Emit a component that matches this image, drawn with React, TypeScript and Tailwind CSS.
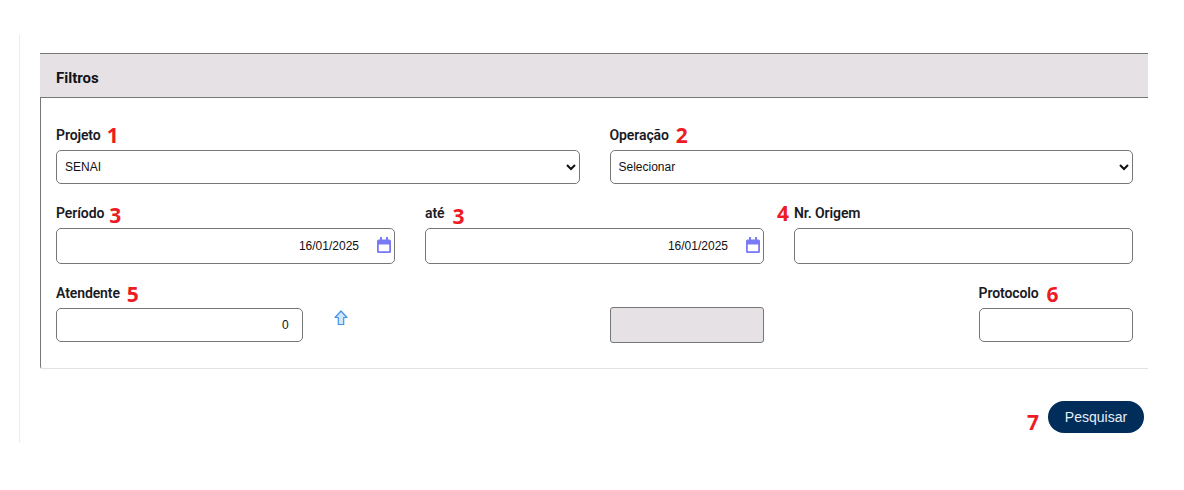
import React from "react";

const labelCls = "text-[14px] leading-[20px] font-semibold text-[#1a1a24] font-['Roboto',sans-serif] tracking-[-0.1px]";
const numCls = "text-[21px] leading-[20px] font-bold text-[#ed1c24] font-['Open_Sans',sans-serif]";
const fieldCls = "block w-full border border-[#767676] rounded-[5px] bg-white text-[12px] text-[#111] font-['Liberation_Sans',sans-serif] outline-none";

function Label({ text, n, gap = "gap-[7px]", numFirst = false, cls = "", numCls2 = "" }: { text: string; n: string; gap?: string; numFirst?: boolean; cls?: string; numCls2?: string }) {
  return (
    <div className={`flex items-center h-[20px] ${gap} ${cls}`}>
      {numFirst && <span className={`${numCls} ${numCls2}`}>{n}</span>}
      <span className={labelCls}>{text}</span>
      {!numFirst && <span className={`${numCls} ${numCls2}`}>{n}</span>}
    </div>
  );
}

function CalendarIcon() {
  return (
    <svg width="14" height="16" viewBox="0 0 14 16" className="absolute right-[4px] top-[9px]" fill="none">
      <path d="M1.5 2.5 H12.5 A1.5 1.5 0 0 1 14 4 V14.5 A1.5 1.5 0 0 1 12.5 16 H1.5 A1.5 1.5 0 0 1 0 14.5 V4 A1.5 1.5 0 0 1 1.5 2.5 Z" fill="#7a7af5" />
      <rect x="3" y="0" width="2" height="3" fill="#7a7af5" />
      <rect x="9" y="0" width="2" height="3" fill="#7a7af5" />
      <rect x="1.8" y="7.5" width="10.4" height="6.7" fill="#ffffff" />
    </svg>
  );
}

function DateField() {
  return (
    <div className="relative">
      <input readOnly value="16/01/2025" className={`${fieldCls} h-[36px] text-right pr-[35px]`} />
      <CalendarIcon />
    </div>
  );
}

export default function App() {
  return (
    <div className="w-[1184px] h-[490px] bg-white pt-[35px] pl-[19px] overflow-hidden">
      <div className="w-[1129px] h-[408px] border-l border-[#e3eef6] pl-[20px] pt-[18px]">
        <section className="w-[1108px] h-[316px] border-l border-[#767676] rounded-bl-[3px] flex flex-col">
          <div className="h-[45px] shrink-0 bg-[#e5e1e4] border-y border-[#767676] flex items-center -ml-px pl-[16px] pt-[5px]">
            <h2 className="text-[15px] font-bold text-[#111118] font-['Roboto',sans-serif]">Filtros</h2>
          </div>
          <div className="flex-1 border-b border-[#e2e2e2] pl-[15px] pr-[15px] pt-[27px]">
            <div className="grid grid-cols-12 gap-x-[30px]">
              <div className="col-span-6">
                <Label text="Projeto" n="1" gap="gap-[6px]" />
                <select defaultValue="SENAI" className={`${fieldCls} h-[34px] mt-[5px] pl-[4px]`}>
                  <option>SENAI</option>
                </select>
              </div>
              <div className="col-span-6">
                <Label text="Operação" n="2" />
                <select defaultValue="Selecionar" className={`${fieldCls} h-[34px] mt-[5px] pl-[4px]`}>
                  <option>Selecionar</option>
                </select>
              </div>

              <div className="col-span-4 mt-[19px]">
                <Label text="Período" n="3" gap="gap-[5px]" numCls2="translate-y-[2px]" />
                <div className="mt-[5px]"><DateField /></div>
              </div>
              <div className="col-span-4 mt-[19px]">
                <Label text="até" n="3" gap="gap-[8px]" numCls2="translate-y-[3px]" />
                <div className="mt-[5px]"><DateField /></div>
              </div>
              <div className="col-span-4 mt-[19px]">
                <Label text="Nr. Origem" n="4" numFirst gap="gap-[5px]" cls="-ml-[17px]" />
                <input readOnly className={`${fieldCls} h-[36px] mt-[5px]`} />
              </div>

              <div className="col-span-3 mt-[19px]">
                <Label text="Atendente" n="5" gap="gap-[7px]" numCls2="translate-y-[1px]" />
                <input readOnly value="0" className={`${fieldCls} h-[34px] mt-[5px] text-right pr-[13px]`} />
              </div>
              <div className="col-span-3 mt-[19px] pt-[27px]">
                <svg width="14" height="16" viewBox="0 0 14 16" className="ml-[1px]">
                  <path d="M7 1 L13 7.5 H9.7 V14.5 H4.3 V7.5 H1 Z" fill="#cfe6fb" stroke="#3f92e6" strokeWidth="1.2" strokeLinejoin="round" />
                </svg>
              </div>
              <div className="col-span-2 col-start-7 mt-[19px] pt-[24px]">
                <div className="h-[36px] bg-[#e5e1e4] border border-[#767676] rounded-[3px]" />
              </div>
              <div className="col-span-2 col-start-11 mt-[19px]">
                <Label text="Protocolo" n="6" gap="gap-[8px]" numCls2="translate-y-[1px]" />
                <input readOnly className={`${fieldCls} h-[34px] mt-[5px]`} />
              </div>
            </div>
          </div>
        </section>
        <div className="w-[1104px] flex justify-end items-start mt-[32px] gap-[9px]">
          <span className={`${numCls} mt-[11px]`}>7</span>
          <button className="w-[96px] h-[32px] rounded-full bg-[#002d5a] text-[#e8eef5] text-[14px] font-['Liberation_Sans',sans-serif]">Pesquisar</button>
        </div>
      </div>
    </div>
  );
}
